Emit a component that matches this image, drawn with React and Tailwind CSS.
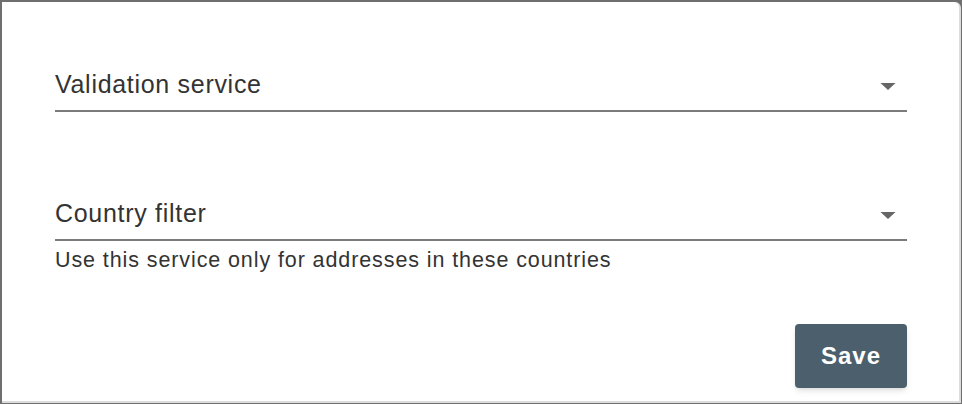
import { useState } from "react";

function SelectField({ label, helper }) {
    return (
        <div className="flex flex-col">
            <div className="flex items-end justify-between h-[48px] border-b-2 border-[#7b7b7b] pb-[13px] pr-[11px]">
                <span className="text-[25px] tracking-[0.7px] text-[#333] leading-none">{label}</span>
                <svg width="16" height="7" viewBox="0 0 16 7" className="mb-[7px]">
                    <path d="M0.5 0 L15.5 0 L8 7 Z" fill="#666" />
                </svg>
            </div>
            {helper && (
                <p className="text-[21.5px] tracking-[0.9px] text-[#333] leading-none mt-[9px]">{helper}</p>
            )}
        </div>
    )
}

export default function App() {
    const [saving] = useState(false)

    return (
        <div className="w-[962px] h-[404px] bg-[#6f6f6f] pt-[2px] pl-[2px] pr-[1px] pb-[1px] font-['Liberation_Sans',Arial,sans-serif]">
            <div className="w-full h-full bg-white rounded-tr-[6px] border-r-2 border-b-2 border-[#dcdcdc] flex flex-col pl-[53px] pr-[52px]">
                {/* Validation service */}
                <div className="mt-[62px]">
                    <SelectField label="Validation service" />
                </div>

                {/* Country filter */}
                <div className="mt-[81px]">
                    <SelectField
                        label="Country filter"
                        helper="Use this service only for addresses in these countries"
                    />
                </div>

                <div className="flex justify-end mt-[52px]">
                    <button
                        disabled={saving}
                        className="w-[112px] h-[64px] bg-[#4b5f6d] rounded-[4px] text-white font-bold text-[24px] tracking-[1px] shadow-md"
                    >
                        Save
                    </button>
                </div>
            </div>
        </div>
    )
}
